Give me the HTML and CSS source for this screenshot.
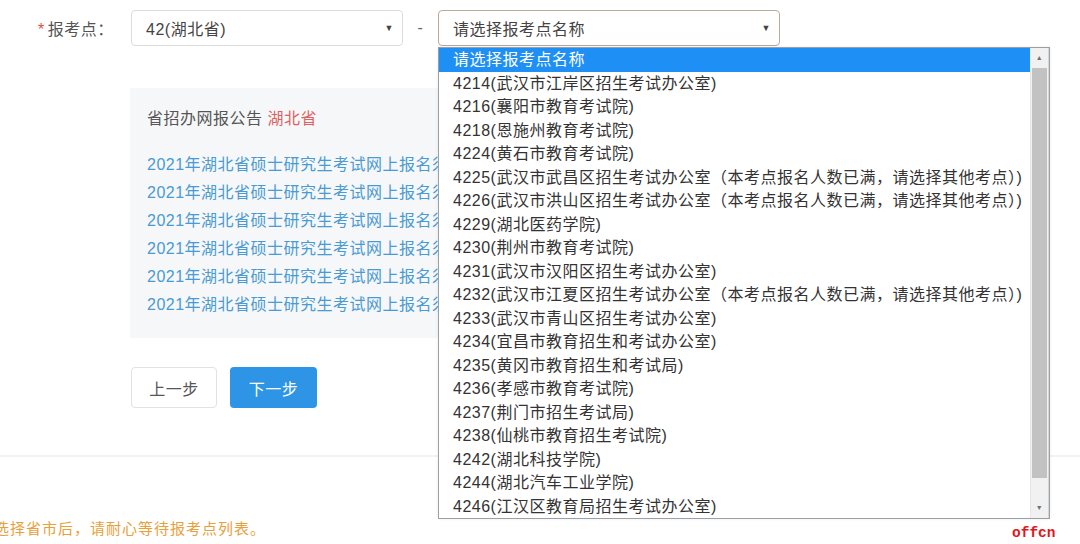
FILE: index.html
```html
<!DOCTYPE html>
<html lang="zh-CN">
  <head>
    <meta charset="UTF-8" />
    <title>报考点选择</title>
    <link rel="stylesheet" href="styles.css">
  </head>

  <body>
    <div class="form-row">
      <label class="field-label"><span class="star">*</span>报考点：</label>
      <div class="select province">42(湖北省)<span class="caret">&#9660;</span></div>
      <span class="dash">-</span>
      <div class="select site">请选择报考点名称<span class="caret">&#9660;</span></div>
    </div>

    <div class="notice">
      <p class="notice-title">省招办网报公告 <span class="prov">湖北省</span></p>
      <ul class="notice-list">
        <li><a href="#">2021年湖北省硕士研究生考试网上报名须知</a></li>
        <li><a href="#">2021年湖北省硕士研究生考试网上报名须知</a></li>
        <li><a href="#">2021年湖北省硕士研究生考试网上报名须知</a></li>
        <li><a href="#">2021年湖北省硕士研究生考试网上报名须知</a></li>
        <li><a href="#">2021年湖北省硕士研究生考试网上报名须知</a></li>
        <li><a href="#">2021年湖北省硕士研究生考试网上报名须知</a></li>
      </ul>
    </div>

    <div class="actions">
      <button class="btn prev">上一步</button>
      <button class="btn next">下一步</button>
    </div>

    <div class="divider"></div>

    <p class="tip">选择省市后，请耐心等待报考点列表。</p>

    <div class="dropdown">
      <ul class="options">
        <li class="active">请选择报考点名称</li>
        <li>4214(武汉市江岸区招生考试办公室)</li>
        <li>4216(襄阳市教育考试院)</li>
        <li>4218(恩施州教育考试院)</li>
        <li>4224(黄石市教育考试院)</li>
        <li>4225(武汉市武昌区招生考试办公室（本考点报名人数已满，请选择其他考点）)</li>
        <li>4226(武汉市洪山区招生考试办公室（本考点报名人数已满，请选择其他考点）)</li>
        <li>4229(湖北医药学院)</li>
        <li>4230(荆州市教育考试院)</li>
        <li>4231(武汉市汉阳区招生考试办公室)</li>
        <li>4232(武汉市江夏区招生考试办公室（本考点报名人数已满，请选择其他考点）)</li>
        <li>4233(武汉市青山区招生考试办公室)</li>
        <li>4234(宜昌市教育招生和考试办公室)</li>
        <li>4235(黄冈市教育招生和考试局)</li>
        <li>4236(孝感市教育考试院)</li>
        <li>4237(荆门市招生考试局)</li>
        <li>4238(仙桃市教育招生考试院)</li>
        <li>4242(湖北科技学院)</li>
        <li>4244(湖北汽车工业学院)</li>
        <li>4246(江汉区教育局招生考试办公室)</li>
      </ul>
      <div class="scrollbar">
        <span class="arrow">&#9650;</span>
        <div class="track"><div class="thumb"></div></div>
        <span class="arrow">&#9660;</span>
      </div>
    </div>

    <div class="watermark">offcn</div>
  </body>
</html>
```

FILE: styles.css
```css
* {
  padding: 0;
  margin: 0;
  box-sizing: border-box;
}

body {
  width: 1080px;
  height: 544px;
  overflow: hidden;
  position: relative;
  background: white;
  font-family: "Liberation Sans", "Noto Sans CJK SC", sans-serif;
  font-size: 16px;
  letter-spacing: 0.5px;
  color: #333;
}

.form-row {
  display: flex;
  align-items: center;
  padding: 10px 0 0 38px;
}

.field-label {
  width: 93px;
  color: #555;
}

.star {
  color: #e0503a;
  margin-right: 3px;
}

.select {
  height: 36px;
  border: 1px solid #dcdcdc;
  border-radius: 4px;
  display: flex;
  align-items: center;
  justify-content: space-between;
  padding: 0 8px 0 14px;
  color: #444;
  background: white;
}

.province {
  width: 272px;
}

.site {
  width: 342px;
  border-color: #b9aa9a;
}

.caret {
  font-size: 9px;
  color: #444;
}

.dash {
  width: 35px;
  text-align: center;
  color: #666;
}

.notice {
  margin: 42px 0 0 130px;
  width: 460px;
  height: 250px;
  background: #f5f7f8;
  padding: 21px 17px;
}

.notice-title {
  color: #555;
  line-height: 20px;
}

.prov {
  color: #e06060;
}

.notice-list {
  list-style: none;
  margin-top: 26px;
  white-space: nowrap;
}

.notice-list li {
  height: 28px;
  line-height: 20px;
}

.notice-list a {
  color: #4a9ad3;
  text-decoration: none;
}

.actions {
  display: flex;
  gap: 13px;
  margin: 29px 0 0 131px;
}

.btn {
  height: 41px;
  width: 86px;
  border-radius: 4px;
  font-family: inherit;
  font-size: 16px;
  letter-spacing: 0.5px;
}

.prev {
  background: white;
  border: 1px solid #e2e2e2;
  color: #555;
}

.next {
  width: 87px;
  background: #2e95e6;
  border: none;
  color: white;
}

.divider {
  margin-top: 47px;
  border-top: 2px solid #f2f2f2;
}

.tip {
  margin: 60px 0 0 -6px;
  font-size: 15px;
  letter-spacing: 1px;
  white-space: nowrap;
  color: #e8a03c;
}

.dropdown {
  position: absolute;
  left: 438px;
  top: 47px;
  width: 612px;
  height: 472px;
  border: 1px solid #9aa0a6;
  background: white;
  display: flex;
  box-shadow: 0 0 3px rgba(0, 0, 0, 0.08);
}

.options {
  flex: 1;
  list-style: none;
  overflow: hidden;
}

.options li {
  height: 23.5px;
  line-height: 23.5px;
  padding-left: 14px;
  white-space: nowrap;
  color: #333;
}

.options li.active {
  background: #1e8ff5;
  color: white;
}

.scrollbar {
  width: 19px;
  display: flex;
  flex-direction: column;
  background: #f1f1f1;
  border-left: 1px solid #e6e6e6;
  border-right: 1px solid #d6d6d6;
}

.arrow {
  height: 20px;
  font-size: 7px;
  color: #707070;
  text-align: center;
  line-height: 20px;
}

.track {
  flex: 1;
  padding: 0 1px;
}

.thumb {
  height: 410px;
  background: #c2c2c2;
}

.watermark {
  position: absolute;
  left: 1012px;
  top: 525px;
  font-family: "Liberation Mono", monospace;
  font-weight: bold;
  font-size: 14.5px;
  letter-spacing: 0;
  color: #e0161d;
}
```
